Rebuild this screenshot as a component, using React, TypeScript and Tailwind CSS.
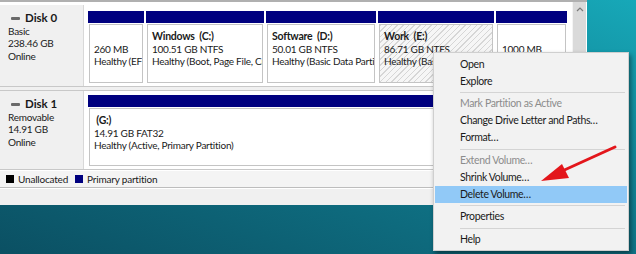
import React from 'react';

const font = { fontFamily: 'Lato, "Noto Sans", sans-serif' };

type Part = {
  w: string;
  name?: string;
  size: string;
  status: string;
  selected?: boolean;
};

const disk0: Part[] = [
  { w: 'w-[58px]', size: '260 MB', status: 'Healthy (EFI System Partition)' },
  { w: 'w-[120px]', name: 'Windows  (C:)', size: '100.51 GB NTFS', status: 'Healthy (Boot, Page File, Crash Dump, Basic Data Partition)' },
  { w: 'w-[112px]', name: 'Software  (D:)', size: '50.01 GB NTFS', status: 'Healthy (Basic Data Partition)' },
  { w: 'w-[118px]', name: 'Work  (E:)', size: '86.71 GB NTFS', status: 'Healthy (Basic Data Partition)', selected: true },
  { w: 'w-[73px]', size: '1000 MB', status: 'Healthy (Recovery Partition)' },
];

function Partition({ p, grow }: { p: Part; grow?: boolean }) {
  return (
    <div className={`${grow ? 'flex-1' : p.w} flex flex-col pr-[2px]`}>
      <div className="h-[12px] bg-[#00007f]" />
      <div className="flex-1 pt-[1px] px-[1px]">
        <div
          className={`h-full border border-[#c4c4c4] px-[4px] pt-[5px] overflow-hidden whitespace-pre text-[10px] tracking-[-0.25px] leading-[12.5px] text-[#1a1a1a] ${
            p.selected
              ? 'bg-[repeating-linear-gradient(135deg,#d6d6d6_0px,#d6d6d6_1px,#f6f6f6_1px,#f6f6f6_4px)] border-[#9a9a9a]'
              : 'bg-white'
          }`}
        >
          <div className="font-bold h-[12.5px] text-[10.5px]">{p.name ?? ''}</div>
          <div>{p.size}</div>
          <div>{p.status}</div>
        </div>
      </div>
    </div>
  );
}

function DiskLabel({ name, lines }: { name: string; lines: string[] }) {
  return (
    <div className="w-[84px] shrink-0 bg-[#f0f0f0] border-r border-[#d8d8d8] pl-[8px] pt-[7px] text-[10px] tracking-[-0.25px] leading-[12.5px] text-[#1a1a1a]">
      <div className="flex items-center gap-[5px]">
        <div className="ml-[3px] w-[9px] h-[3px] bg-[#6a6a6a] rounded-[1px]" />
        <span className="font-bold text-[11.5px] tracking-normal">{name}</span>
      </div>
      {lines.map((l) => (
        <div key={l}>{l}</div>
      ))}
    </div>
  );
}

type Item = { label: string; disabled?: boolean; active?: boolean } | 'sep';

const menu: Item[] = [
  { label: 'Open' },
  { label: 'Explore' },
  'sep',
  { label: 'Mark Partition as Active', disabled: true },
  { label: 'Change Drive Letter and Paths…' },
  { label: 'Format…' },
  'sep',
  { label: 'Extend Volume…', disabled: true },
  { label: 'Shrink Volume…' },
  { label: 'Delete Volume…', active: true },
  'sep',
  { label: 'Properties' },
  'sep',
  { label: 'Help' },
];

export default function App() {
  return (
    <div
      style={font}
      className="relative w-[636px] h-[254px] overflow-hidden bg-gradient-to-bl from-[#17a8b8] via-[#0f7487] to-[#0b5063]"
    >
      {/* window */}
      <div className="w-[587px] h-[205px] bg-[#f0f0f0] border-t-2 border-[#b0b0b0] flex">
        <div className="flex-1 flex flex-col bg-white">
          <div className="h-[3px]" />
          {/* disk 0 */}
          <div className="h-[82px] flex border-b border-[#c8c8c8]">
            <DiskLabel name="Disk 0" lines={['Basic', '238.46 GB', 'Online']} />
            <div className="flex-1 flex pl-[4px] pt-[6px] pb-[3px]">
              {disk0.map((p) => (
                <Partition key={p.size} p={p} />
              ))}
            </div>
          </div>
          <div className="h-[3px] bg-[#f0f0f0]" />
          {/* disk 1 */}
          <div className="h-[80px] flex border-y border-[#c8c8c8]">
            <DiskLabel name="Disk 1" lines={['Removable', '14.91 GB', 'Online']} />
            <div className="flex-1 flex pl-[4px] pt-[4px] pb-[3px]">
              <Partition
                grow
                p={{ w: '', name: ' (G:)', size: '14.91 GB FAT32', status: 'Healthy (Active, Primary Partition)' }}
              />
            </div>
          </div>
          {/* legend */}
          <div className="h-[17px] mt-[1px] flex items-center gap-[4px] pl-[6px] bg-[#f4f4f4] border-b border-[#bdbdbd] text-[10px] tracking-[-0.2px] text-[#1a1a1a]">
            <div className="w-[8px] h-[8px] bg-black" />
            <span>Unallocated</span>
            <div className="ml-[3px] w-[8px] h-[8px] bg-[#00007f]" />
            <span>Primary partition</span>
          </div>
          {/* status bar */}
          <div className="flex-1 bg-[#f0f0f0] border-t border-white" />
        </div>
        {/* scrollbar */}
        <div className="w-[14px] bg-[#dadada] border-l border-[#f4f4f4] flex flex-col items-center pt-[5px]">
          <svg width="8" height="5" viewBox="0 0 8 5">
            <path d="M1 4 L4 1 L7 4" fill="none" stroke="#7a7a7a" strokeWidth="1.2" />
          </svg>
        </div>
        <div className="w-[1px] bg-white" />
      </div>

      {/* context menu */}
      <div className="absolute left-[433px] top-[52px] w-[196px] bg-[#f2f2f2] border border-[#cfcfcf] pt-[3px] pb-[2px] shadow-[2px_3px_5px_rgba(0,0,0,0.45)] text-[10.5px] tracking-[-0.35px] text-[#1a1a1a]">
        {menu.map((it, i) =>
          it === 'sep' ? (
            <div key={i} className="h-[5.5px] flex items-center pl-[26px] pr-[3px]">
              <div className="h-[1px] w-full bg-[#d4d4d4]" />
            </div>
          ) : (
            <div
              key={i}
              className={`h-[17px] mx-[1px] pl-[25px] flex items-center whitespace-nowrap ${
                it.active ? 'bg-[#91c9f7]' : ''
              } ${it.disabled ? 'text-[#8c8c8c]' : ''}`}
            >
              {it.label}
            </div>
          )
        )}
      </div>

      {/* red arrow */}
      <svg className="absolute left-0 top-0" width="636" height="254" viewBox="0 0 636 254">
        <line x1="615" y1="147" x2="560" y2="172" stroke="#e3161b" strokeWidth="3" strokeLinecap="round" />
        <polygon points="541,181 562,164 569,178" fill="#e3161b" />
      </svg>
    </div>
  );
}
